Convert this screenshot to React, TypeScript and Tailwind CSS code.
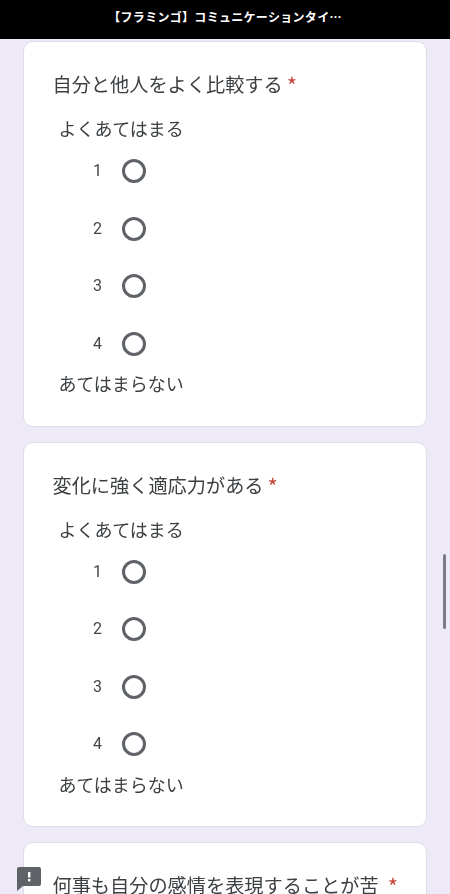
const font = { fontFamily: '"Noto Sans CJK JP", Roboto, sans-serif' };

function Scale() {
  return (
    <div className="flex flex-col">
      {["1", "2", "3", "4"].map((n) => (
        <div key={n} className="flex items-center h-[57.5px] pl-[69px]">
          <span className="w-[29px] text-[16px] leading-none text-[#444746] [font-family:Roboto,sans-serif]">{n}</span>
          <span className="w-[24px] h-[24px] rounded-full border-[3px] border-[#5f6368]" />
        </div>
      ))}
    </div>
  );
}

function Card({ title }: { title: string }) {
  return (
    <div className="h-[385.5px] rounded-[10px] bg-white border border-[#dfdce8] pt-[27.5px] px-[28.5px] shrink-0">
      <div className="h-[30px] flex items-center text-[19.2px] text-[#3c4043] whitespace-nowrap">
        {title}
        <span className="ml-[4px] text-[22px] text-[#c5473c]">*</span>
      </div>
      <div className="mt-[14px] ml-[6px] h-[30px] flex items-center text-[18px] text-[#3c4043]">よくあてはまる</div>
      <div className="-mx-[28.5px] -mt-[1px]">
        <Scale />
      </div>
      <div className="-mt-[4px] ml-[6px] h-[30px] flex items-center text-[18px] text-[#3c4043]">あてはまらない</div>
    </div>
  );
}

export default function App() {
  return (
    <div style={font} className="relative w-[450px] h-[894px] overflow-hidden bg-[#ede9f7]">
      <header className="h-[39px] bg-black flex items-center justify-center pb-[5px] text-white text-[12px] font-bold tracking-[0.3px] whitespace-nowrap">
        【フラミンゴ】コミュニケーションタイ…
      </header>
      <main className="flex flex-col gap-[15px] pt-[2px] mx-[23px] blur-[0.3px]">
        <Card title="自分と他人をよく比較する" />
        <Card title="変化に強く適応力がある" />
        <div className="h-[120px] rounded-[10px] bg-white border border-[#dfdce8] pt-[27.5px] px-[28.5px] shrink-0">
          <div className="h-[30px] flex items-center text-[19.2px] text-[#3c4043] whitespace-nowrap">
            何事も自分の感情を表現することが苦
            <span className="ml-[9px] text-[22px] text-[#c5473c]">*</span>
          </div>
        </div>
      </main>
      <div className="absolute left-[443px] top-[554px] w-[3px] h-[75px] rounded-full bg-[#7c7a86]" />
      <svg className="absolute left-[17px] top-[867px]" width="24" height="24" viewBox="0 0 24 24" aria-hidden="true">
        <path d="M2 0H22a2 2 0 0 1 2 2V17a2 2 0 0 1-2 2H6L0 24V2a2 2 0 0 1 2-2Z" fill="#5f6368" />
        <rect x="11" y="5" width="2.4" height="5.5" fill="#fff" />
        <rect x="11" y="12" width="2.4" height="2.4" fill="#fff" />
      </svg>
    </div>
  );
}
